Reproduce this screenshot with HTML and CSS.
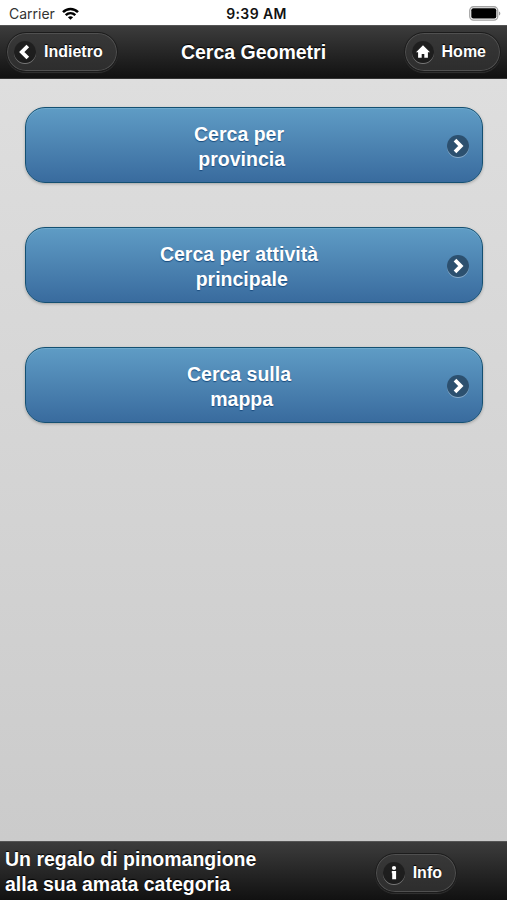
FILE: index.html
```html
<!DOCTYPE html>
<html lang="it">
<head>
  <meta charset="UTF-8" />
  <meta name="viewport" content="width=device-width, initial-scale=1.0" />
  <title>Cerca Geometri</title>
  <link rel="stylesheet" href="styles.css">
</head>
<body>
  <div class="statusbar">
    <div class="carrier">
      <span>Carrier</span>
      <svg class="wifi" width="17" height="13" viewBox="0 0 17 13" fill="none" stroke="#000" stroke-width="2.5">
        <path d="M1 5.2C5.2 1 11.8 1 16 5.2" />
        <path d="M3.7 8.1c2.8-2.6 6.8-2.6 9.6 0" />
        <path d="M8.5 12.8L5.9 10.2c1.5-1.4 3.7-1.4 5.2 0z" fill="#000" stroke="none" />
      </svg>
    </div>
    <div class="time">9:39 AM</div>
    <div class="battery">
      <svg width="32" height="15" viewBox="0 0 32 15">
        <rect x=".75" y=".75" width="28" height="13.3" rx="3.8" fill="#fff" stroke="#a3a3a3" stroke-width="1.3" />
        <rect x="2.3" y="2.3" width="25" height="10.2" rx="2" fill="#000" />
        <path d="M30 5.4c1.8.8 1.8 3.3 0 4.1z" fill="#999" />
      </svg>
    </div>
  </div>

  <div class="header">
    <a class="btn btn-back">
      <span class="icon">
        <svg width="22" height="22" viewBox="0 0 22 22"><path d="M13.8 5L7.8 11l6 6" fill="none" stroke="#fff" stroke-width="3.8" /></svg>
      </span>
      Indietro
    </a>
    <h1>Cerca Geometri</h1>
    <a class="btn btn-home">
      <span class="icon">
        <svg width="22" height="22" viewBox="0 0 22 22"><path d="M11 4.2L4 11.2h2.1v5.6h3.6v-3.8h2.6v3.8h3.6v-5.6H18z" fill="#fff" /></svg>
      </span>
      Home
    </a>
  </div>

  <div class="content">
    <a class="search">
      <span class="label">Cerca per<br />&nbsp;provincia</span>
      <span class="icon">
        <svg width="22" height="22" viewBox="0 0 22 22"><path d="M8 5.2l5.8 5.8L8 16.8" fill="none" stroke="#fff" stroke-width="3.8" /></svg>
      </span>
    </a>
    <a class="search">
      <span class="label">Cerca per attività<br />&nbsp;principale</span>
      <span class="icon">
        <svg width="22" height="22" viewBox="0 0 22 22"><path d="M8 5.2l5.8 5.8L8 16.8" fill="none" stroke="#fff" stroke-width="3.8" /></svg>
      </span>
    </a>
    <a class="search">
      <span class="label">Cerca sulla<br />&nbsp;mappa</span>
      <span class="icon">
        <svg width="22" height="22" viewBox="0 0 22 22"><path d="M8 5.2l5.8 5.8L8 16.8" fill="none" stroke="#fff" stroke-width="3.8" /></svg>
      </span>
    </a>
  </div>

  <div class="footer">
    <div class="credits">Un regalo di pinomangione<br />alla sua amata categoria</div>
    <a class="btn btn-info">
      <span class="icon">
        <svg width="22" height="22" viewBox="0 0 22 22"><circle cx="11" cy="6" r="2.1" fill="#fff" /><path d="M8.8 9h4.3v8.2H9.2v-6H8.8z" fill="#fff" /></svg>
      </span>
      Info
    </a>
  </div>
</body>
</html>
```

FILE: styles.css
```css
* {
  box-sizing: border-box;
}

body {
  margin: 0;
  height: 100vh;
  display: flex;
  flex-direction: column;
  overflow: hidden;
  background-color: #d0d0d0;
  font-family: "Liberation Sans", Arial, sans-serif;
  font-weight: bold;
  color: #fff;
}

.statusbar {
  height: 25px;
  display: grid;
  grid-template-columns: 1fr auto 1fr;
  align-items: center;
  padding: 2px 6px 0 9px;
  background-color: #fff;
  color: #111;
  font-family: Inter, sans-serif;
}

.carrier {
  display: flex;
  align-items: center;
  gap: 7px;
  font-size: 14px;
  font-weight: 400;
  color: #333;
}

.time {
  padding-left: 3px;
  font-size: 14px;
  font-weight: 600;
  letter-spacing: 0.4px;
}

.battery {
  display: flex;
  justify-content: flex-end;
}

.header {
  height: 54px;
  display: grid;
  grid-template-columns: 1fr auto 1fr;
  align-items: center;
  padding: 0 6px 1px;
  border-top: 1px solid #555;
  border-bottom: 1px solid #333;
  background: linear-gradient(#3c3c3c, #111);
  text-shadow: 0 -1px 1px #000;
}

h1 {
  margin: 0;
  font-size: 19.5px;
  line-height: 24px;
}

.btn {
  height: 40px;
  display: flex;
  align-items: center;
  gap: 8px;
  padding: 0 14px 0 7px;
  border: 1px solid #1c1c1c;
  border-radius: 20px;
  background: linear-gradient(#383838, #2d2d2d);
  box-shadow: inset 0 0 0 1px #505050, 0 1px 1px #333;
  font-size: 16px;
  text-shadow: 0 -1px 1px #000;
}

.btn-back {
  justify-self: start;
}

.btn-home {
  justify-self: end;
}

.icon {
  width: 22px;
  height: 22px;
  border-radius: 50%;
  background-color: rgba(0, 0, 0, 0.4);
  box-shadow: 0 1px 0 rgba(255, 255, 255, 0.35);
}

.icon svg {
  display: block;
}

.content {
  flex: 1;
  display: flex;
  flex-direction: column;
  gap: 44px;
  padding: 28px 24px 0 25px;
  background: linear-gradient(#dedede, #cbcbcb);
}

.search {
  height: 76px;
  display: flex;
  align-items: center;
  padding: 2px 13px 0 5px;
  border: 1px solid #145072;
  border-radius: 20px;
  background: linear-gradient(#5f9cc5, #396b9e);
  box-shadow: inset 0 1px 0 #6faacd, 0 1px 3px rgba(0, 0, 0, 0.25);
  font-size: 19.5px;
  line-height: 24.4px;
  text-align: center;
  text-shadow: 0 1px 1px #194b7e;
}

.label {
  flex: 1;
  padding-top: 1px;
}

.search .icon {
  background-color: #2c506f;
}

.footer {
  height: 59px;
  display: flex;
  align-items: center;
  justify-content: space-between;
  padding: 3px 50px 0 5px;
  border-top: 1px solid #555;
  background: linear-gradient(#3c3c3c, #111);
  text-shadow: 0 -1px 1px #000;
}

.credits {
  padding-bottom: 2px;
  font-size: 19.5px;
  line-height: 24.4px;
}
```
